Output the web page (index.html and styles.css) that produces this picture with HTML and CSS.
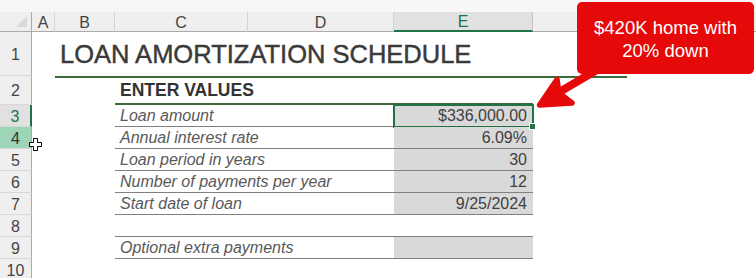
FILE: index.html
```html
<!DOCTYPE html>
<html>
<head>
<meta charset="utf-8">
<link rel="stylesheet" href="styles.css">
</head>
<body>
<div class="top"></div>
<div class="sheet">
  <div class="ch corner g1"></div>
  <div class="ch g1">A</div>
  <div class="ch g1">B</div>
  <div class="ch g1">C</div>
  <div class="ch g1">D</div>
  <div class="ch sel g1">E</div>
  <div class="ch g1"></div>
  <div class="ch last g1"></div>

  <div class="rh g2">1</div>
  <div class="rh g3">2</div>
  <div class="rh g4 rsel">3</div>
  <div class="rh g5 rhov">4</div>
  <div class="rh g6">5</div>
  <div class="rh g7">6</div>
  <div class="rh g8">7</div>
  <div class="rh g9">8</div>
  <div class="rh g10">9</div>
  <div class="rh g11">10</div>

  <div class="title g2">LOAN AMORTIZATION SCHEDULE</div>
  <div class="rule g3"></div>
  <div class="enter g3">ENTER VALUES</div>

  <div class="lab g4">Loan amount</div>
  <div class="val g4 active">$336,000.00</div>
  <div class="lab g5">Annual interest rate</div>
  <div class="val g5">6.09%</div>
  <div class="lab g6">Loan period in years</div>
  <div class="val g6">30</div>
  <div class="lab g7">Number of payments per year</div>
  <div class="val g7">12</div>
  <div class="lab g8">Start date of loan</div>
  <div class="val g8">9/25/2024</div>
  <div class="lab g9"></div>
  <div class="val blank g9"></div>
  <div class="lab g10">Optional extra payments</div>
  <div class="val g10"></div>
</div>

<div class="handle"></div>

<svg class="overlay" width="756" height="278" viewBox="0 0 756 278">
  <line x1="556" y1="94" x2="602" y2="67" stroke="#e50909" stroke-width="8"/>
  <polygon points="539.5,105 557,79.5 559,93 572,103" fill="#e50909" stroke="#e50909" stroke-width="5.5" stroke-linejoin="round"/>
  <polygon points="33.5,138.5 37.5,138.5 37.5,142.5 41.5,142.5 41.5,146.5 37.5,146.5 37.5,150.5 33.5,150.5 33.5,146.5 29.5,146.5 29.5,142.5 33.5,142.5" fill="#fff" stroke="#000" stroke-width="1"/>
</svg>

<div class="callout">$420K home with<br>20% down</div>
</body>
</html>
```

FILE: styles.css
```css
* { box-sizing: border-box; }

body {
  margin: 0;
  width: 756px;
  height: 278px;
  overflow: hidden;
  position: relative;
  background: #ffffff;
  font-family: "Liberation Sans", Arial, sans-serif;
}

.top {
  height: 12px;
  background: #f7f7f7;
}

.sheet {
  display: grid;
  grid-template-columns: 32px 23px 60px 133px 146px 139px 94px 1fr;
  grid-template-rows: 20px 44px 29px repeat(7, 22px) 22px;
}

.g1 { grid-row: 1; }
.g2 { grid-row: 2; }
.g3 { grid-row: 3; }
.g4 { grid-row: 4; }
.g5 { grid-row: 5; }
.g6 { grid-row: 6; }
.g7 { grid-row: 7; }
.g8 { grid-row: 8; }
.g9 { grid-row: 9; }
.g10 { grid-row: 10; }
.g11 { grid-row: 11; }

.ch {
  background: #efefef;
  border-bottom: 1px solid #ababab;
  border-right: 1px solid #d4d4d4;
  font-size: 16px;
  color: #444444;
  display: flex;
  align-items: center;
  justify-content: center;
  padding-top: 2px;
}

.ch.last { border-right: none; }

.ch.sel {
  background: #e1e1e1;
  color: #217346;
  border-bottom: 2px solid #217346;
  border-right: 1px solid #c4c4c4;
}

.corner {
  border-right: 1px solid #ababab;
  justify-content: flex-end;
  align-items: flex-end;
  padding: 0 4px 4px 0;
}

.corner::after {
  content: "";
  width: 11px;
  height: 11px;
  background: #dadada;
  clip-path: polygon(100% 0, 100% 100%, 0 100%);
}

.rh {
  grid-column: 1;
  background: #efefef;
  border-right: 1px solid #ababab;
  border-bottom: 1px solid #d8d8d8;
  font-size: 16px;
  color: #444444;
  display: flex;
  align-items: center;
  justify-content: center;
  padding-top: 2px;
}

.rh.rsel {
  background: #e1e1e1;
  color: #217346;
  border-right: 2px solid #217346;
}

.rh.rhov {
  background: #9fd5b7;
  color: #333333;
}

.title {
  grid-column: 3 / 8;
  display: flex;
  align-items: center;
  padding-left: 5px;
  font-size: 25.5px;
  color: #3a3a3a;
  -webkit-text-stroke: 0.45px #3a3a3a;
}

.rule {
  grid-column: 3 / 8;
  align-self: start;
  height: 2px;
  background: #3c6b3c;
}

.enter {
  grid-column: 4 / 7;
  display: flex;
  align-items: center;
  padding-left: 5px;
  padding-top: 1px;
  font-size: 17.5px;
  font-weight: bold;
  color: #333333;
  border-bottom: 2px solid #3c6b3c;
}

.lab {
  grid-column: 4 / 6;
  display: flex;
  align-items: center;
  padding-left: 5px;
  font-size: 16px;
  font-style: italic;
  color: #595959;
  border-bottom: 1px solid #808080;
}

.val {
  grid-column: 6;
  display: flex;
  align-items: center;
  justify-content: flex-end;
  padding-right: 6px;
  font-size: 16px;
  color: #404040;
  background: #d9d9d9;
  border-bottom: 1px solid #808080;
}

.val.blank { background: #ffffff; }

.val.active {
  outline: 2px solid #217346;
  outline-offset: -1px;
}

.handle {
  position: absolute;
  left: 530px;
  top: 124px;
  width: 5px;
  height: 5px;
  background: #217346;
  border: 1px solid #ffffff;
  box-sizing: content-box;
  margin: -1px 0 0 -1px;
}

.overlay {
  position: absolute;
  left: 0;
  top: 0;
  pointer-events: none;
}

.callout {
  position: absolute;
  left: 577px;
  top: 2px;
  width: 177px;
  height: 72px;
  background: #e50909;
  border-radius: 5px;
  color: #ffffff;
  font-size: 18.5px;
  line-height: 23px;
  text-align: center;
  padding-top: 14px;
}
```
